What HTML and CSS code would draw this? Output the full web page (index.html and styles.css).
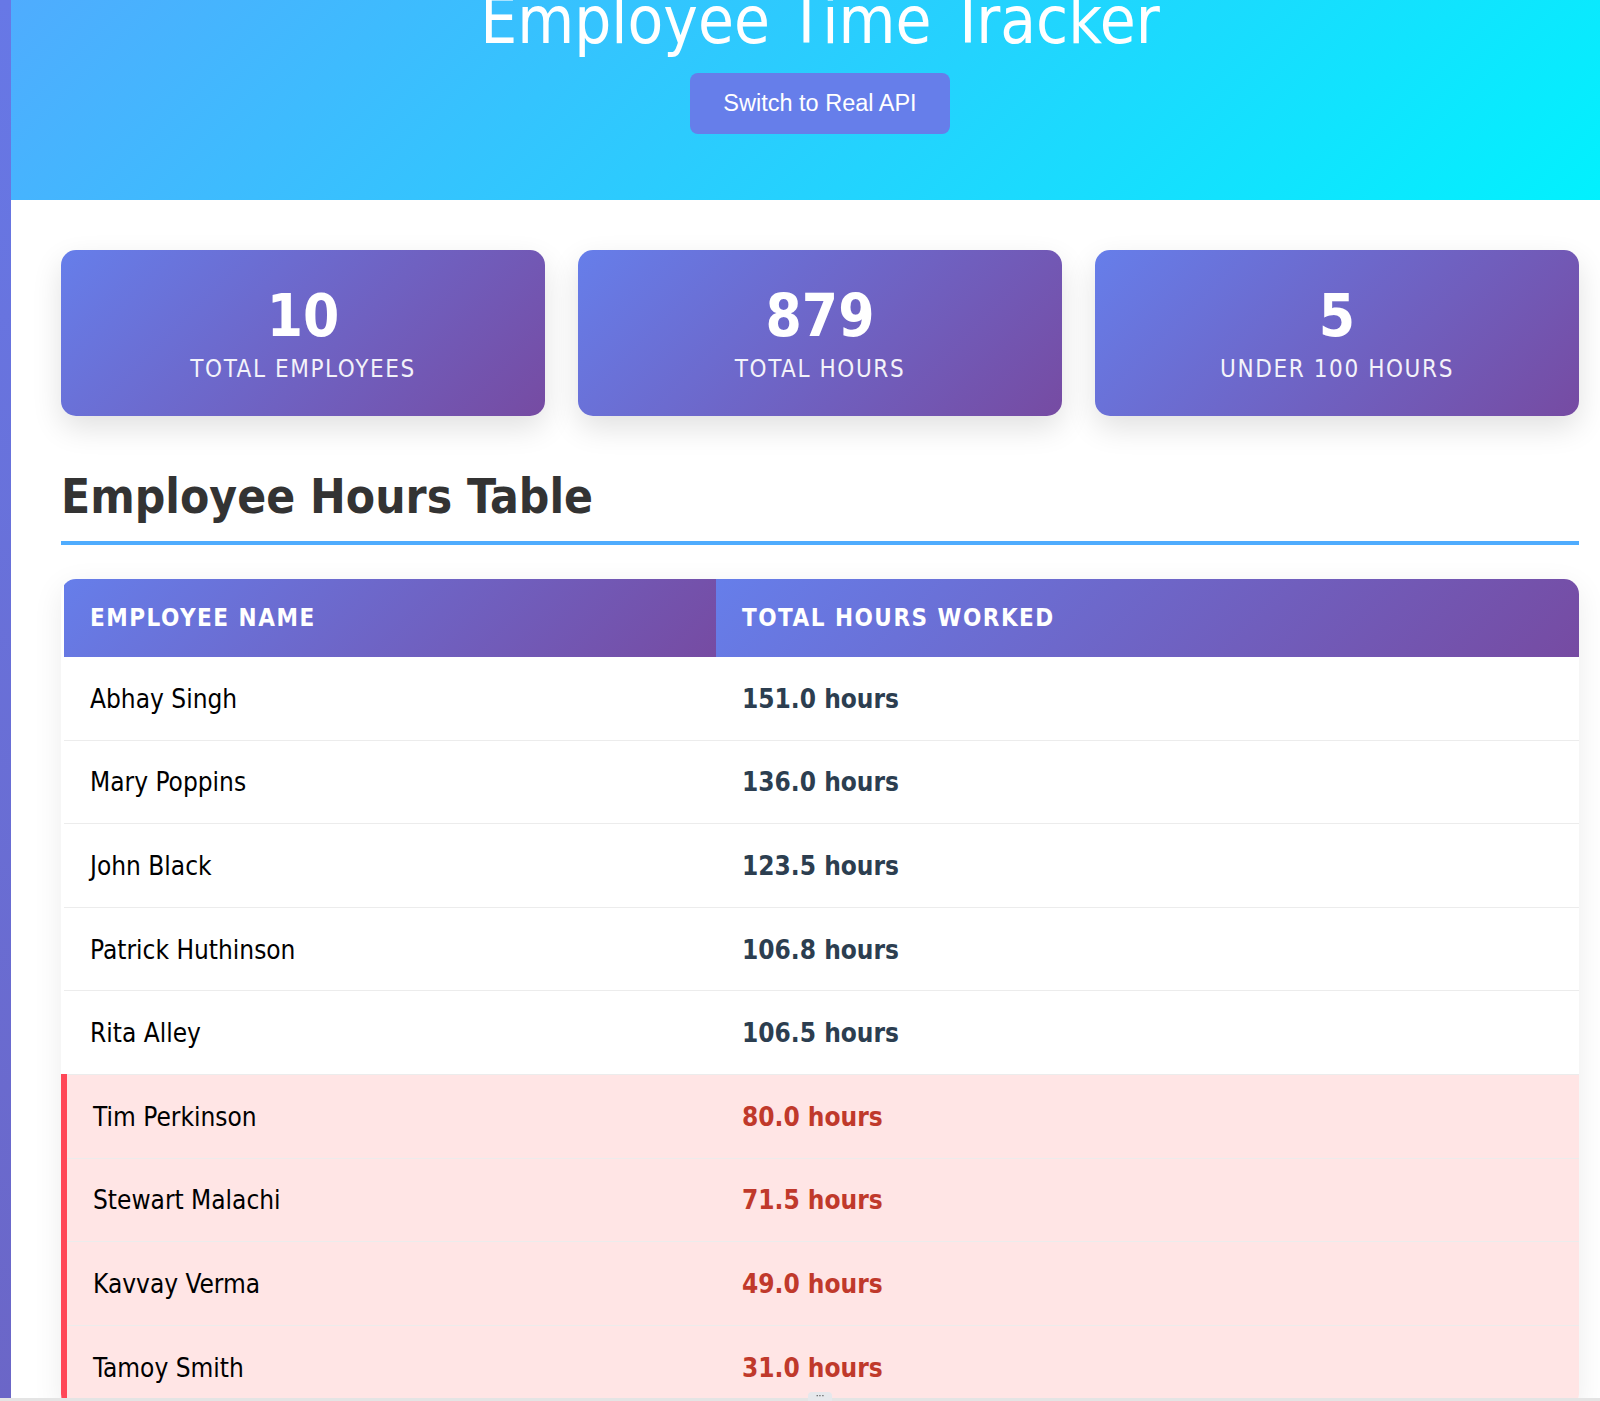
FILE: index.html
```html
<!DOCTYPE html>
<html lang="en">
<head>
<meta charset="utf-8">
<title>Employee Time Tracker</title>
<link rel="stylesheet" href="styles.css">
</head>
<body>
<div class="page">
  <header class="hero">
    <h1 class="hero-title">Employee Time Tracker</h1>
    <button class="hero-btn" type="button">Switch to Real API</button>
  </header>
  <main class="content">
    <section class="stats">
      <div class="stat-card">
        <div class="stat-num">10</div>
        <div class="stat-label">Total Employees</div>
      </div>
      <div class="stat-card">
        <div class="stat-num">879</div>
        <div class="stat-label">Total Hours</div>
      </div>
      <div class="stat-card">
        <div class="stat-num">5</div>
        <div class="stat-label">Under 100 Hours</div>
      </div>
    </section>
    <h2 class="section-title">Employee Hours Table</h2>
    <div class="table-wrap">
      <table class="hours-table">
        <thead>
          <tr><th class="col-name">Employee Name</th><th>Total Hours Worked</th></tr>
        </thead>
        <tbody>
          <tr><td>Abhay Singh</td><td class="hrs">151.0 hours</td></tr>
          <tr><td>Mary Poppins</td><td class="hrs">136.0 hours</td></tr>
          <tr><td>John Black</td><td class="hrs">123.5 hours</td></tr>
          <tr><td>Patrick Huthinson</td><td class="hrs">106.8 hours</td></tr>
          <tr><td>Rita Alley</td><td class="hrs">106.5 hours</td></tr>
          <tr class="low"><td>Tim Perkinson</td><td class="hrs">80.0 hours</td></tr>
          <tr class="low"><td>Stewart Malachi</td><td class="hrs">71.5 hours</td></tr>
          <tr class="low"><td>Kavvay Verma</td><td class="hrs">49.0 hours</td></tr>
          <tr class="low"><td>Tamoy Smith</td><td class="hrs">31.0 hours</td></tr>
        </tbody>
      </table>
    </div>
  </main>
</div>
<div class="bottom-bar"><span class="dots">&middot;&middot;&middot;</span></div>
</body>
</html>
```

FILE: styles.css
```css
html, body {
  margin: 0;
  padding: 0;
}
body {
  background: linear-gradient(180deg, #6778e6 0%, #6b66c7 100%);
  overflow: hidden;
  height: 1401px;
  font-family: "DejaVu Sans Condensed", "DejaVu Sans", sans-serif;
  font-stretch: condensed;
  line-height: 1.6;
  color: #000;
}
.page {
  margin-left: 11px;
  width: 1618px;
  background: #fff;
  min-height: 1500px;
}
.hero {
  background: linear-gradient(135deg, #4facfe 0%, #00f2fe 100%);
  height: 200px;
  display: flex;
  flex-direction: column;
  align-items: center;
  overflow: hidden;
}
.hero-title {
  margin: -17px 0 0;
  font-size: 65px;
  font-weight: normal;
  line-height: 76px;
  color: #fff;
  white-space: nowrap;
}
.hero-btn {
  margin-top: 14px;
  background: #667eea;
  color: #fff;
  border: none;
  border-radius: 8px;
  font-family: "Liberation Sans", Arial, sans-serif;
  font-stretch: normal;
  font-size: 23.5px;
  line-height: 29px;
  padding: 16px 32px;
  width: 260px;
  cursor: pointer;
}
.content {
  padding: 50px 50px 0 50px;
}
.stats {
  display: grid;
  grid-template-columns: repeat(3, 1fr);
  gap: 33px;
}
.stat-card {
  background: linear-gradient(135deg, #667eea 0%, #764ba2 100%);
  border-radius: 15px;
  box-shadow: 0 12px 30px rgba(0, 0, 0, 0.12);
  color: #fff;
  text-align: center;
  padding: 31px 20px;
  height: 166px;
  box-sizing: border-box;
}
.stat-num {
  font-size: 58px;
  font-weight: bold;
  line-height: 70px;
}
.stat-label {
  font-size: 24px;
  line-height: 36px;
  letter-spacing: 1.6px;
  text-transform: uppercase;
  opacity: 0.92;
}
.section-title {
  margin: 53px 0 34px;
  font-size: 47.5px;
  line-height: 56px;
  font-weight: bold;
  color: #333;
  padding-bottom: 16px;
  border-bottom: 4px solid #4facfe;
}
.table-wrap {
  background: #fff;
  border-radius: 15px;
  overflow: hidden;
  box-shadow: 0 8px 30px rgba(0, 0, 0, 0.08);
}
.hours-table {
  width: 100%;
  border-collapse: collapse;
}
.hours-table th {
  background: linear-gradient(135deg, #667eea 0%, #764ba2 100%);
  color: #fff;
  text-align: left;
  font-size: 24px;
  font-weight: bold;
  letter-spacing: 1.5px;
  text-transform: uppercase;
  line-height: 37px;
  padding: 20.5px 26px;
}
.hours-table th.col-name {
  width: 600px;
}
.hours-table td {
  font-size: 26px;
  line-height: 42px;
  padding: 20.8px 26px 19.8px;
  border-bottom: 1px solid #ececec;
  color: #000;
}
.hours-table td.hrs {
  font-weight: bold;
  color: #2c3e50;
}
.hours-table tr.low td {
  background: #ffe5e5;
}
.hours-table tr.low td:first-child {
  border-left: 6px solid #ff4757;
}
.hours-table tr.low td.hrs {
  color: #c0392b;
}
.bottom-bar {
  position: fixed;
  left: 0;
  right: 0;
  bottom: 0;
  height: 3px;
  background: #e4e4e4;
}
.dots {
  position: absolute;
  left: 808px;
  bottom: 0;
  width: 24px;
  height: 9px;
  background: #e6e8ec;
  border-radius: 4px 4px 0 0;
  font-family: "DejaVu Sans", sans-serif;
  font-size: 10px;
  line-height: 8px;
  text-align: center;
  color: #333;
}
```
